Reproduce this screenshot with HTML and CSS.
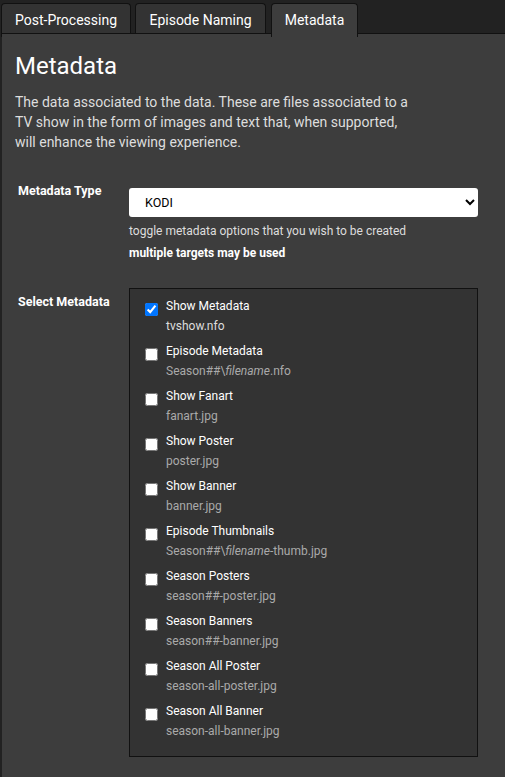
FILE: index.html
```html
<!DOCTYPE html>
<html>
<head>
<meta charset="utf-8">
<link rel="stylesheet" href="styles.css">
</head>
<body>
<div class="tabs">
  <div class="tab">Post-Processing</div>
  <div class="tab">Episode Naming</div>
  <div class="tab active">Metadata</div>
</div>
<div class="panel">
  <h2 class="title">Metadata</h2>
  <p class="desc">The data associated to the data. These are files associated to a TV show in the form of images and text that, when supported, will enhance the viewing experience.</p>

  <div class="row type-row">
    <label class="row-label">Metadata Type</label>
    <div class="row-control">
      <select class="select"><option>KODI</option></select>
      <div class="help">toggle metadata options that you wish to be created</div>
      <div class="help bold">multiple targets may be used</div>
    </div>
  </div>

  <div class="row meta-row">
    <label class="row-label">Select Metadata</label>
    <div class="row-control">
      <div class="box">
        <div class="item"><input type="checkbox" class="cb" checked><div class="item-text"><div class="item-title">Show Metadata</div><div class="item-file on">tvshow.nfo</div></div></div>
        <div class="item"><input type="checkbox" class="cb"><div class="item-text"><div class="item-title">Episode Metadata</div><div class="item-file">Season##\<i>filename</i>.nfo</div></div></div>
        <div class="item"><input type="checkbox" class="cb"><div class="item-text"><div class="item-title">Show Fanart</div><div class="item-file">fanart.jpg</div></div></div>
        <div class="item"><input type="checkbox" class="cb"><div class="item-text"><div class="item-title">Show Poster</div><div class="item-file">poster.jpg</div></div></div>
        <div class="item"><input type="checkbox" class="cb"><div class="item-text"><div class="item-title">Show Banner</div><div class="item-file">banner.jpg</div></div></div>
        <div class="item"><input type="checkbox" class="cb"><div class="item-text"><div class="item-title">Episode Thumbnails</div><div class="item-file">Season##\<i>filename</i>-thumb.jpg</div></div></div>
        <div class="item"><input type="checkbox" class="cb"><div class="item-text"><div class="item-title">Season Posters</div><div class="item-file">season##-poster.jpg</div></div></div>
        <div class="item"><input type="checkbox" class="cb"><div class="item-text"><div class="item-title">Season Banners</div><div class="item-file">season##-banner.jpg</div></div></div>
        <div class="item"><input type="checkbox" class="cb"><div class="item-text"><div class="item-title">Season All Poster</div><div class="item-file">season-all-poster.jpg</div></div></div>
        <div class="item"><input type="checkbox" class="cb"><div class="item-text"><div class="item-title">Season All Banner</div><div class="item-file">season-all-banner.jpg</div></div></div>
      </div>
    </div>
  </div>
</div>
</body>
</html>
```
FILE: styles.css
```css
html, body {
  margin: 0;
  padding: 0;
  background: #222;
  font-family: Roboto, "Liberation Sans", sans-serif;
  color: #ddd;
  height: 100%;
}
body {
  display: flex;
  flex-direction: column;
}
.tabs {
  display: flex;
  padding: 3px 0 0 1px;
  height: 33px;
  box-sizing: border-box;
}
.tab {
  box-sizing: border-box;
  height: 34px;
  padding: 0;
  white-space: nowrap;
  background: #333;
  border: 1px solid #111;
  border-bottom: none;
  border-radius: 4px 4px 0 0;
  font-size: 14px;
  line-height: 32px;
  color: #fff;
  text-align: center;
}
.tab:nth-child(1) { width: 130px; }
.tab:nth-child(2) { width: 131px; margin-left: 4px; }
.tab.active {
  width: 87px;
  margin-left: 5px;
  background: #3d3d3d;
  position: relative;
  z-index: 1;
}
.panel {
  flex: 1;
  background: #3d3d3d;
  margin-left: 2px;
  border-top: 1px solid #111;
  padding: 0 27px 0 13px;
}
.title {
  margin: 17px 0 0 0;
  font-size: 24px;
  font-weight: 400;
  line-height: 30px;
  color: #fff;
}
.desc {
  margin: 11px 0 0 0;
  font-size: 14px;
  line-height: 20px;
  max-width: 400px;
  color: #ddd;
}
.row {
  display: flex;
}
.type-row { margin-top: 36px; }
.meta-row { margin-top: 24px; }
.row-label {
  width: 114px;
  flex: none;
  padding-left: 3px;
  box-sizing: border-box;
  font-size: 12.5px;
  font-weight: 700;
  color: #fff;
  line-height: 16px;
}
.type-row .row-label { margin-top: -5px; }
.meta-row .row-label { padding-top: 6px; }
.row-control {
  flex: 1;
}
.select {
  display: block;
  width: 100%;
  height: 29px;
  border: none;
  border-radius: 3px;
  background: #fff;
  color: #000;
  font-family: Roboto, "Liberation Sans", sans-serif;
  font-size: 12.5px;
  padding: 0 8px 0 12px;
}
.help {
  font-size: 12px;
  line-height: 22px;
  color: #ddd;
  margin-top: 3px;
}
.help.bold {
  font-weight: 700;
  color: #fff;
  margin-top: 0;
}
.box {
  background: #333;
  border: 1px solid #111;
  padding: 7px 0 15px 15px;
}
.item {
  display: flex;
  align-items: flex-start;
  height: 45px;
}
.item:last-child { height: 40px; }
.cb {
  margin: 7px 8px 0 0;
  width: 13px;
  height: 13px;
  flex: none;
}
.item-title {
  font-size: 12px;
  line-height: 20px;
  color: #fff;
}
.item-file {
  font-size: 12px;
  line-height: 20px;
  color: #aaa;
}
.item-file.on { color: #ddd; }
```
